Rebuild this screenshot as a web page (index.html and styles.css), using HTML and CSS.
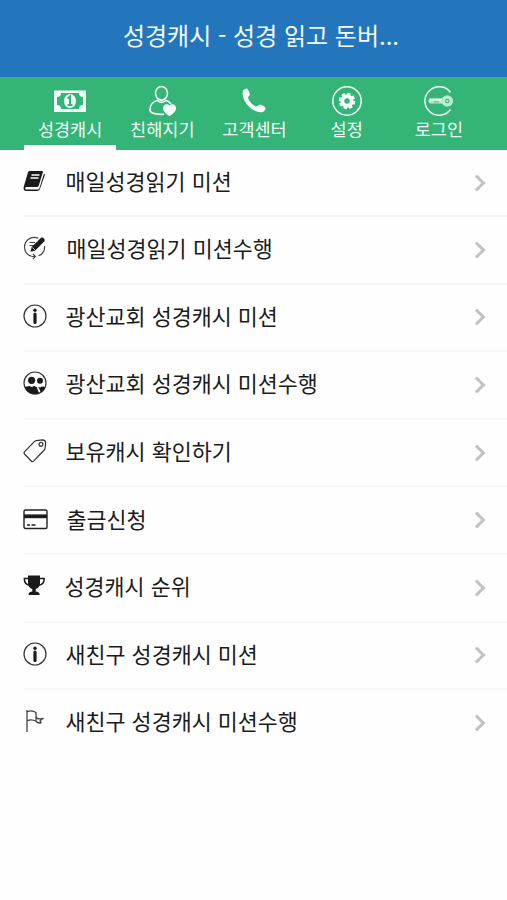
FILE: index.html
```html
<!DOCTYPE html>
<html lang="ko">
<head>
<meta charset="utf-8">
<title>성경캐시</title>
<link rel="stylesheet" href="styles.css">
</head>
<body>
<header class="titlebar"><h1>성경캐시 - 성경 읽고 돈버...</h1></header>
<nav class="tabs">
  <a class="tab active">
    <svg width="34" height="32" viewBox="0 0 34 32"><path fill="currentColor" fill-rule="evenodd" d="M1 5.500h32v21.500H1zM8 8a4 4 0 0 1-4 4v8a4 4 0 0 1 4 4h18a4 4 0 0 1 4-4v-8a4 4 0 0 1-4-4z"/><ellipse cx="17" cy="16" rx="6" ry="7" fill="currentColor"/><path d="M14.500 13.500l2.500-2v8.500m-2.500 0h5" fill="none" stroke="#34b476" stroke-width="2"/></svg>
    <span>성경캐시</span>
  </a>
  <a class="tab">
    <svg width="32" height="32" viewBox="0 0 32 32"><g fill="none" stroke="currentColor" stroke-width="1.600"><ellipse cx="15.500" cy="8.300" rx="6" ry="6.800"/><path d="M18 29.200c-6 .6-14-.7-14-4.200 0-6 3.500-8.500 7.200-9.500q4.300 3.600 8.600 0c2.400.5 4 1.700 5.200 3.500"/></g><path fill="currentColor" d="M23.500 31c-3.500-2-6.500-4.500-6.500-8 0-4 4.500-5 6.500-2.500 2-2.500 6.500-1.500 6.500 2.500 0 3.500-3 6-6.500 8z"/></svg>
    <span>친해지기</span>
  </a>
  <a class="tab">
    <svg width="32" height="32" viewBox="0 0 32 32"><path fill="currentColor" d="M5 5.500c1-1.200 3.200-2.400 4-1.900 1.400 1.400 2.700 4.300 2.900 5.700 0 1.400-2.200 2.400-1.700 3.900 1.300 3.500 4.300 6.900 7.800 8.200 1.500.5 2.800-1.900 4-1.900 1.500.2 4.900 2.100 5.500 3.200.5 1.300-1.100 3.500-2.200 4-7.800 3.500-23.300-10-20.300-21.200z"/></svg>
    <span>고객센터</span>
  </a>
  <a class="tab">
    <svg width="32" height="32" viewBox="0 0 32 32"><circle cx="16" cy="16" r="14.200" fill="none" stroke="currentColor" stroke-width="1.500"/><circle cx="16" cy="16" r="4.700" fill="none" stroke="currentColor" stroke-width="4"/><circle cx="16" cy="16" r="6.800" fill="none" stroke="currentColor" stroke-width="3" stroke-dasharray="3.200 2.140"/></svg>
    <span>설정</span>
  </a>
  <a class="tab">
    <svg width="32" height="32" viewBox="0 0 32 32"><path fill="none" stroke="currentColor" stroke-width="1.500" d="M27.500 7.500A14.200 14.200 0 1 0 27.500 24.500"/><rect x="5.500" y="13.200" width="15" height="5.400" rx="2" fill="#b7ecd0"/><path d="M7 14.800h12" stroke="currentColor" stroke-width="1.600"/><path d="M11 16.800h5" stroke="#58bf8c" stroke-width="1.200"/><circle cx="24.300" cy="16" r="4" fill="none" stroke="#b7ecd0" stroke-width="3.600"/><circle cx="24.300" cy="16" r="1.200" fill="#b7ecd0"/></svg>
    <span>로그인</span>
  </a>
</nav>
<ul class="menu">
  <li><svg class="ico" viewBox="0 0 24 24"><path fill="currentColor" d="M6.500 2h12.200c1 0 1.400.6 1.100 1.600l-4 13c-.3 1-.9 1.400-1.800 1.400H3.500c-1.500 0-1.900 2.500 0 2.500h10.700c1.300 0 1.900-.4 2.300-1.500l4.500-14.500c1 .6.900 1.300.6 2.300L17.300 19c-.5 1.900-1.500 3-3.300 3H3.500C1 22 0 20 .8 17.500L4.800 4c.3-1.200.8-2 1.700-2z"/><path d="M8.500 6h8M7.500 9h8" stroke="#fff" stroke-width="1.300"/></svg><span class="label">매일성경읽기 미션</span><i class="chevron"></i></li>
  <li><svg class="ico" viewBox="0 0 24 24"><g fill="none" stroke="#444" stroke-width="1.200"><path d="M15.500 2.200C7-.8 1 5.500 1.600 12c.4 3.500 2.500 7.500 8 8.500h3M21.500 10c.6 4.500-2 8.500-6 9.800M9.800 17.800l2.700 2.700-2.700 2.700M6.500 6.500h5.500M6.500 9.500h4"/></g><path fill="currentColor" d="M7.500 15.800l1.200-4.800L18 1.800c1.700-1.200 4.500 1.400 3.400 3.400L12 14.700z"/><path d="M9.400 11.500l2.600 2.500" stroke="#fff" stroke-width=".7"/></svg><span class="label nudge">매일성경읽기 미션수행</span><i class="chevron"></i></li>
  <li><svg class="ico" viewBox="0 0 24 24"><circle cx="12" cy="12" r="11" fill="none" stroke="#333" stroke-width="1.200"/><circle cx="12" cy="6.300" r="1.700" fill="currentColor"/><path d="M12 10v8.500" stroke="currentColor" stroke-width="3.200" stroke-linecap="round"/></svg><span class="label">광산교회 성경캐시 미션</span><i class="chevron"></i></li>
  <li><svg class="ico" viewBox="0 0 24 24"><circle cx="12" cy="12" r="11" fill="none" stroke="#333" stroke-width="1.200"/><g fill="currentColor"><circle cx="8.600" cy="9.300" r="3.600"/><circle cx="17" cy="9.700" r="3"/><path d="M1.700 15.700l5-.7 2 1 2.500-1 2.500 1 2.500 6.500c-6 2-12.200-.5-14.500-6.800zM15 15.500l2 1 2-1 3.300.5c-.8 2.500-2.300 4.500-4.300 5.500z"/></g></svg><span class="label">광산교회 성경캐시 미션수행</span><i class="chevron"></i></li>
  <li><svg class="ico" viewBox="0 0 24 24"><g fill="none" stroke="#333" stroke-width="1.200" stroke-linejoin="round"><path d="M1.400 12.800Q.4 14 1.500 15l6.700 7q1.100 1.200 2.400.1L21.200 11q.8-.8.900-1.800l.6-5.200Q22.500 1 19.500.9l-6.200.8q-1.200.2-2 1z"/><circle cx="18" cy="5.300" r="2"/></g></svg><span class="label">보유캐시 확인하기</span><i class="chevron"></i></li>
  <li><svg class="ico" viewBox="0 0 24 24"><rect x="1" y="3" width="23" height="18.500" rx="1.500" fill="none" stroke="#222" stroke-width="1.400"/><path d="M1 9.300h23" stroke="currentColor" stroke-width="3.800"/><path d="M4 18h3M8.500 18h4" stroke="currentColor" stroke-width="1.400"/></svg><span class="label nudge">출금신청</span><i class="chevron"></i></li>
  <li><svg class="ico" viewBox="0 0 24 24"><path fill="currentColor" d="M5 1.500h12v8c0 3-1.800 4.700-4.300 5.500v2.500c2.500.2 4 1.100 4 3.500H5.500c0-2.400 1.300-3.300 3.800-3.500V15C6.800 14.200 5 12.500 5 9.500z"/><path fill="none" stroke="currentColor" stroke-width="1.500" d="M6 4.500H1.300C1.300 8.500 3.500 11 7 11.200M16.500 4.500h4.700c0 4-2.200 6.500-5.700 6.700"/></svg><span class="label back">성경캐시 순위</span><i class="chevron"></i></li>
  <li><svg class="ico" viewBox="0 0 24 24"><circle cx="12" cy="12" r="11" fill="none" stroke="#333" stroke-width="1.200"/><circle cx="12" cy="6.300" r="1.700" fill="currentColor"/><path d="M12 10v8.500" stroke="currentColor" stroke-width="3.200" stroke-linecap="round"/></svg><span class="label">새친구 성경캐시 미션</span><i class="chevron"></i></li>
  <li><svg class="ico" viewBox="0 0 24 24"><path fill="none" stroke="#444" stroke-width="1.300" stroke-linejoin="round" d="M4 1v22M4 3c3-1.800 6.500-1.200 9 .5v8.800c-3-1.800-6-1.800-9-.5M13 7l1 2.300c2 .9 4 .6 6.200.2L17 11.800l1 2c-1.800.5-3.700 0-5-1.500"/></svg><span class="label">새친구 성경캐시 미션수행</span><i class="chevron"></i></li>
</ul>
</body>
</html>
```
FILE: styles.css
```css
* { box-sizing: border-box; }
body {
  margin: 0;
  min-height: 900px;
  background: #fefefe;
  color: #1b1b1b;
  font-family: "Noto Sans CJK KR", "Noto Sans", sans-serif;
}
.titlebar {
  height: 77px;
  background: #2376bb;
  color: #f4faff;
  display: flex;
  align-items: center;
  justify-content: center;
  padding: 0 0 8px 15px;
}
.titlebar h1 {
  margin: 0;
  font-size: 24px;
  font-weight: 400;
  line-height: 36px;
  white-space: nowrap;
}
.tabs {
  height: 73px;
  padding: 0 22px 0 24px;
  background: #34b476;
  display: grid;
  grid-template-columns: repeat(5, 1fr);
  color: #f3fff8;
}
.tab {
  display: flex;
  flex-direction: column;
  align-items: center;
  padding-top: 8px;
  border-bottom: 5px solid transparent;
}
.tab.active { border-bottom-color: #fefefe; }
.tab svg { flex: none; }
.tab span {
  font-size: 17.500px;
  line-height: 24px;
}
.menu {
  margin: 0;
  padding: 0 0 0 24px;
  list-style: none;
}
.menu li {
  height: 67.600px;
  display: flex;
  align-items: center;
  border-bottom: 2px solid #f6f6f6;
  padding-right: 20.500px;
}
.menu li:first-child { height: 67px; }
.menu li:last-child { border-bottom-color: transparent; }
.ico {
  width: 24px;
  height: 24px;
  margin: 0 18.500px 3px -1px;
  flex: none;
  overflow: visible;
}
.label {
  flex: 1;
  font-size: 21.750px;
  line-height: 32px;
  padding-bottom: 3px;
  white-space: nowrap;
}
.nudge { margin-left: 1px; }
.back { margin-left: -1px; }
.chevron {
  width: 12px;
  height: 12px;
  margin-right: 4px;
  border: solid #c2c2c2;
  border-width: 3px 3px 0 0;
  transform: rotate(45deg);
}
```
